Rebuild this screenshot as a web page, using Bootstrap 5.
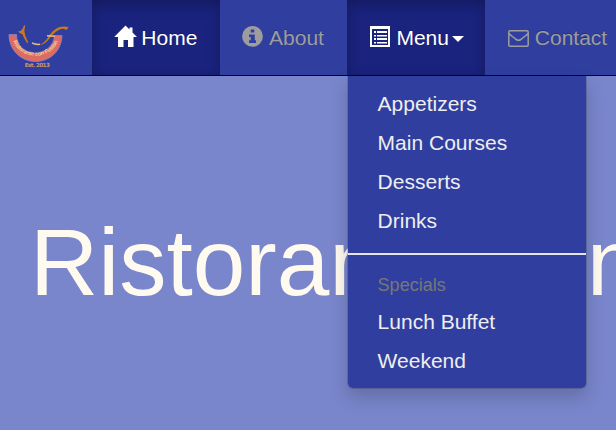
<!DOCTYPE html>
<html lang="en">
<head>
<meta charset="utf-8">
<meta name="viewport" content="width=device-width, initial-scale=1">
<title>Ristorante con Fusion</title>
<link href="https://cdn.jsdelivr.net/npm/bootstrap@5.3.0/dist/css/bootstrap.min.css" rel="stylesheet">
<style>
  body { background: #7986cb; font: 21px/30px "Liberation Sans", Arial, sans-serif; }
  .site-bar { height: 76px; background: #303f9f; border-bottom: 1px solid #080808; z-index: 10; }
  .brand { width: 92px; }
  .site-bar .nav-link { height: 75px; padding: 22.5px; color: #9d9d9d; line-height: 30px; white-space: pre; text-shadow: 0 -1px 0 rgba(0,0,0,.25); }
  .site-bar .nav-link.active { color: #fff; background: #1a237e; box-shadow: inset 0 4.5px 13.5px rgba(0,0,0,.25); }
  .glyph { width: 21px; height: 21px; fill: currentColor; vertical-align: -2px; overflow: visible; }
  .site-bar .about-link { padding-right: 23.2px; }
  .about-link .glyph { margin-left: -.7px; margin-right: 1.7px; }
  .site-bar .menu-link { padding-right: 21.5px; }
  .menu-arrow { display: inline-block; margin-left: 3px; vertical-align: middle; border: 6px solid transparent; border-top-color: currentColor; border-bottom: 0; }
  .site-bar .dropdown-menu { top: 75px; left: 0; width: 240px; padding: 8px 0; font-size: 21px; background: #303f9f; background-clip: padding-box; border: 1px solid rgba(0,0,0,.15); border-top-color: #080808; border-radius: 0 0 6px 6px; box-shadow: 0 9px 18px rgba(0,0,0,.175); }
  .site-bar .dropdown-item { padding: 4.5px 29.5px; line-height: 30px; color: #eee; }
  .site-bar .dropdown-divider { height: 2px; margin: 13px 0; background: #e5e5e5; border: 0; opacity: 1; }
  .site-bar .dropdown-header { padding: 4.5px 29.5px; font-size: 18px; line-height: 25px; color: #777; }
  .hero { padding: 134px 30px 0; height: 354px; overflow: hidden; }
  .hero h1 { margin: 0; font-size: 94.5px; line-height: 104px; font-weight: 400; color: floralwhite; white-space: nowrap; }
</style>
</head>
<body class="overflow-hidden">
<nav class="site-bar d-flex position-relative">
  <a class="brand flex-shrink-0" href="#" aria-label="Ristorante con Fusion">
    <svg class="d-block" width="92" height="75" viewBox="0 0 92 75">
      <path d="M9 34.500h7.500c0 11 8 18.500 18.500 18.500S54 45.500 54.500 35.500H62C61.500 51 50 61.500 35.500 61.500S9 50 9 34.500z" fill="#dc6b66" stroke="#8c86bd" stroke-width=".8"/>
      <defs><path id="arc" d="M12.500 39a23.500 21 0 0 0 46 0"/></defs>
      <text font-family="Liberation Sans, sans-serif" font-size="5.600" font-weight="700" fill="#f3d08d"><textPath href="#arc" startOffset="50%" text-anchor="middle" textLength="56">Ristorante con Fusion</textPath></text>
      <path d="M18 31.500q3 0 5-3.500l1-2.800 1.200.3-.9 5.500q.5 5 3.900 11.500l-1 .8q-2.800-4.200-5-9.300-2-.2-4.200-2.500z" fill="#c9791c"/>
      <path d="M38 45q6-1 10-7.500 5-8 11-10.200 4.500-1.500 9.500-.3-.8 2.500-3 3-1.500-2-5.200-.8-4.800 1.800-9.300 7.300-6.500 9.500-13 8.500z" fill="#c9791c"/>
      <path d="M32 42.800q3 2 8 1.500M47 35.800l8 .4" fill="none" stroke="#e6bd85" stroke-width="1.500"/>
      <text x="37.300" y="66.700" text-anchor="middle" font-family="DejaVu Sans, sans-serif" font-size="5.600" font-weight="700" fill="#cf9466" textLength="25">Est. 2013</text>
    </svg>
  </a>
  <ul class="nav flex-nowrap">
    <li class="nav-item"><a class="nav-link active" href="#"><svg class="glyph" viewBox="0 0 21 21"><path d="M10.500-.5 14.500 3.500V1.500h3v5L22 11h-3.500v10H13v-7H8.500v7H3V11H-.8z"/></svg> Home</a></li>
    <li class="nav-item"><a class="nav-link about-link" href="#"><svg class="glyph" viewBox="0 0 21 21"><path fill-rule="evenodd" d="M10.500 0a10.400 10.400 0 1 0 0 20.800 10.400 10.400 0 0 0 0-20.800zM8.700 3.500h3.600v3H8.700zM7 8.500h5.800v5.800H14V17H7v-2.700h1.700V11H7z"/></svg> About</a></li>
    <li class="nav-item dropdown"><a class="nav-link menu-link active" href="#" aria-expanded="true"><svg class="glyph" viewBox="0 0 21 21"><path fill-rule="evenodd" d="M0 0h20v21H0zM2 3v16h16V3z"/><path d="M4 5h2v2H4zm3 0h10v2H7zM4 9h2v1.500H4zm3 0h10v1.500H7zM4 12h2v2H4zm3 0h10v2H7zM4 16h2v1.500H4zm3 0h10v1.500H7z"/></svg> Menu<span class="menu-arrow"></span></a>
      <ul class="dropdown-menu show">
        <li><a class="dropdown-item" href="#">Appetizers</a></li>
        <li><a class="dropdown-item" href="#">Main Courses</a></li>
        <li><a class="dropdown-item" href="#">Desserts</a></li>
        <li><a class="dropdown-item" href="#">Drinks</a></li>
        <li><hr class="dropdown-divider"></li>
        <li><h6 class="dropdown-header">Specials</h6></li>
        <li><a class="dropdown-item" href="#">Lunch Buffet</a></li>
        <li><a class="dropdown-item" href="#">Weekend</a></li>
      </ul>
    </li>
    <li class="nav-item"><a class="nav-link" href="#"><svg class="glyph" viewBox="0 0 21 21"><path d="M2 4.800h17q1.200 0 1.200 1.200v13q0 1.200-1.200 1.200H2Q.8 20.200.8 19V6Q.8 4.800 2 4.800zM1 7.500q2 2 7 5.800 2.500 2 5 0 5-3.800 7-5.800" fill="none" stroke="currentColor" stroke-width="1.500"/></svg> Contact</a></li>
  </ul>
</nav>
<main class="hero"><h1>Ristorante con Fusion</h1></main>
<script src="https://cdn.jsdelivr.net/npm/bootstrap@5.3.0/dist/js/bootstrap.bundle.min.js"></script>
</body>
</html>
